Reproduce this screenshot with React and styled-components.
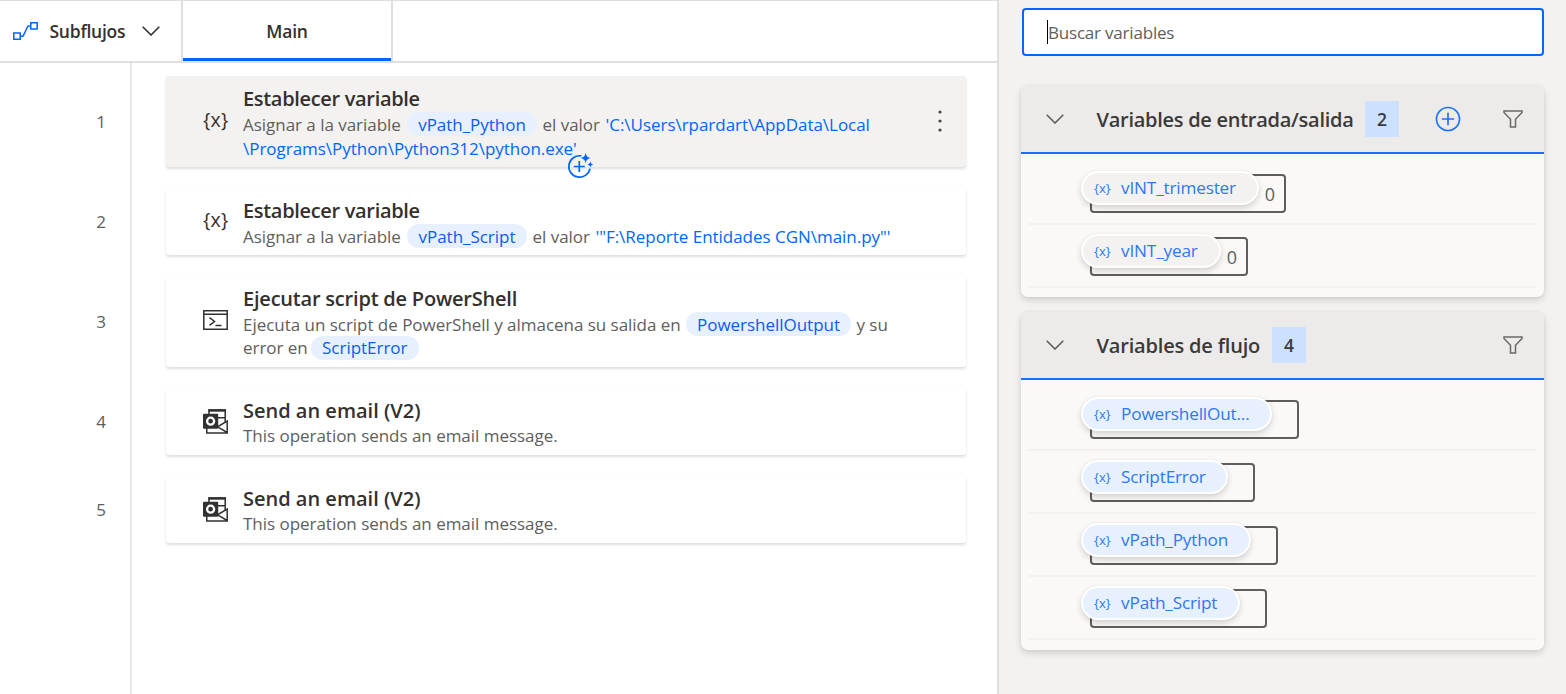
import React from "react";
import styled, { createGlobalStyle } from "styled-components";

const Global = createGlobalStyle`
  *, *::before, *::after { box-sizing: border-box; }
  html, body { margin: 0; padding: 0; background: #fff; overflow: hidden; }
  body { font-family: "Open Sans", "Noto Sans", sans-serif; color: #323130; }
  svg { display: block; flex: none; }
`;

const Page = styled.div`
  display: flex;
  width: 1566px;
  height: 694px;
`;

const Editor = styled.main`
  display: flex;
  flex-direction: column;
  width: 999px;
  border-right: 2px solid #e1dfdd;
`;

const TabBar = styled.header`
  display: flex;
  height: 63px;
  border-top: 1px solid #e1dfdd;
  border-bottom: 2px solid #e1dfdd;
`;

const SubflowButton = styled.div`
  display: flex;
  align-items: center;
  width: 183px;
  padding-left: 13px;
  border-right: 2px solid #e1dfdd;
  font-size: 17.5px;
  font-weight: 600;
`;

const SubflowLabel = styled.span`
  width: 92px;
  margin-left: 11.5px;
  letter-spacing: -0.25px;
`;

const Tab = styled.div`
  display: flex;
  align-items: center;
  justify-content: center;
  width: 210px;
  border-right: 2px solid #e1dfdd;
  box-shadow: inset 0 -3px 0 #0066ff;
  font-size: 17.5px;
  font-weight: 600;
  letter-spacing: -0.2px;
`;

const Steps = styled.div`
  display: flex;
  flex: 1;
`;

const Gutter = styled.div`
  display: flex;
  flex-direction: column;
  gap: 21px;
  width: 132px;
  padding-top: 13px;
  border-right: 2px solid #e8e7e6;
`;

const StepNumber = styled.div`
  display: flex;
  align-items: center;
  justify-content: center;
  height: ${(p) => p.$h}px;
  padding-left: 72px;
  color: #605e5c;
  font-size: 17px;
`;

const Cards = styled.div`
  display: flex;
  flex-direction: column;
  gap: 21px;
  padding: 13px 0 0 34px;
`;

const Card = styled.article`
  position: relative;
  display: flex;
  align-items: center;
  width: 800px;
  height: ${(p) => p.$h}px;
  padding-left: 37px;
  border-radius: 3px;
  background: ${(p) => (p.$active ? "#f3f2f1" : "#fff")};
  box-shadow: 0 2px 3px rgba(0, 0, 0, 0.13), 0 0 1px rgba(0, 0, 0, 0.05);
`;

const CardIcon = styled.div`
  width: 40px;
  padding-bottom: ${(p) => p.$lift || 0}px;
`;

const CardText = styled.div`
  display: flex;
  flex-direction: column;
  align-self: flex-start;
  padding-top: 8px;
`;

const CardTitle = styled.h3`
  margin: 0;
  height: 28px;
  font-size: 20px;
  font-weight: 600;
  line-height: 30px;
  letter-spacing: ${(p) => p.$ls || 0}px;
  white-space: nowrap;
`;

const Line = styled.div`
  display: flex;
  height: 24px;
  color: #605e5c;
  font-size: 17px;
  line-height: ${(p) => (p.$raised ? 24 : 26)}px;
  letter-spacing: -0.03px;
  white-space: pre;
`;

const Text = styled.span`
  width: ${(p) => (p.$w ? p.$w + "px" : "auto")};
  height: 24px;
  color: ${(p) => (p.$value ? "#0066ff" : "inherit")};
`;

const Token = styled.span`
  width: ${(p) => p.$w}px;
  height: 24px;
  border-radius: 12px;
  margin-right: 5.5px;
  background: #e6f0ff;
  color: #0b5cf0;
  text-align: center;
`;

const AddBadge = styled.div`
  position: absolute;
  left: 401px;
  top: 76px;
`;

const MoreButton = styled.div`
  margin-left: auto;
  margin-right: 24.5px;
  padding-bottom: 2px;
`;

const BraceIcon = styled.span`
  display: block;
  color: ${(p) => (p.$small ? "#2f78ee" : "#323130")};
  font-size: ${(p) => (p.$small ? 13 : 19.5)}px;
  font-weight: ${(p) => (p.$small ? 500 : 400)};
  line-height: 24px;
  letter-spacing: ${(p) => (p.$small ? 0 : 0.2)}px;
`;

const Side = styled.aside`
  display: flex;
  flex-direction: column;
  width: 567px;
  padding: 8px 22px 0 22px;
  background: #f3f2f1;
`;

const Search = styled.div`
  display: flex;
  align-items: center;
  width: 522px;
  height: 48px;
  margin-left: 1px;
  padding-left: 23px;
  border: 2px solid #0066ff;
  border-radius: 4px;
  background: #fff;
  color: #605e5c;
  font-size: 17px;
  letter-spacing: -0.2px;
`;

const Caret = styled.i`
  width: 1px;
  height: 24px;
  background: #000;
`;

const Group = styled.section`
  display: flex;
  flex-direction: column;
  width: 523px;
  height: ${(p) => p.$h}px;
  margin-top: ${(p) => p.$mt}px;
  border-radius: 7px;
  background: #faf9f8;
  box-shadow: 0 3px 7px rgba(0, 0, 0, 0.15), 0 0 3px rgba(0, 0, 0, 0.06);
`;

const GroupHead = styled.header`
  display: flex;
  align-items: center;
  height: 67.5px;
  padding: 0 21.5px 0 24.5px;
  border-bottom: 2px solid #1a6fff;
  border-radius: 7px 7px 0 0;
  background: #ecebe9;
  color: #3b3a39;
`;

const GroupTitle = styled.h2`
  margin: 0 0 0 33px;
  padding-top: 2px;
  width: ${(p) => p.$w}px;
  font-size: 20px;
  font-weight: 600;
  white-space: nowrap;
  letter-spacing: ${(p) => p.$ls || 0}px;
`;

const Count = styled.span`
  width: 34px;
  height: 36px;
  background: #cce0ff;
  font-size: 17.5px;
  font-weight: 600;
  line-height: 36px;
  text-align: center;
`;

const HeadActions = styled.div`
  display: flex;
  align-items: center;
  gap: 41.5px;
  margin-left: auto;
`;

const Rows = styled.div`
  display: flex;
  flex-direction: column;
  padding: 8.5px 7px 0;
`;

const VarRow = styled.div`
  display: flex;
  height: 63px;
  padding: 9px 0 0 53px;
  border-bottom: 2px solid #f3f2f1;
`;

const Chip = styled.div`
  display: grid;
  height: 44px;
  width: ${(p) => p.$w + 26.5}px;
`;

const ValueBox = styled.div`
  grid-area: 1 / 1;
  display: flex;
  align-items: center;
  justify-content: flex-end;
  height: 39px;
  margin: 3px 0 0 9px;
  padding: 0 8.5px 0 0;
  border: 2px solid #605e5c;
  border-radius: 4px;
  color: #605e5c;
  font-size: 18px;
`;

const VarPill = styled.div`
  grid-area: 1 / 1;
  z-index: 1;
  display: flex;
  align-items: center;
  width: ${(p) => p.$w}px;
  height: 34px;
  padding-left: 11px;
  border: 2px solid #fff;
  border-radius: 17px;
  background: ${(p) => (p.$neutral ? "#f3f2f1" : "#e6f0ff")};
  box-shadow: 0 3px 6px rgba(0, 0, 0, 0.16), 0 0 2px rgba(0, 0, 0, 0.06);
`;

const VarName = styled.span`
  margin-left: 10.5px;
  padding-bottom: 2px;
  color: #2f78ee;
  font-size: 17.2px;
  font-weight: 450;
  white-space: nowrap;
  letter-spacing: -0.18px;
`;

const Chevron = ({ color = "#323130" }) => (
  <svg width="18" height="10" viewBox="0 0 18 10" fill="none" stroke={color} strokeWidth="1.6">
    <path d="M.7.8 9 9 17.3.8" />
  </svg>
);

const FlowIcon = () => (
  <svg width="25" height="18" viewBox="0 0 25 18" fill="none" stroke="#0066ff" strokeWidth="1.5">
    <path d="M.8 10.9h6.4v6.3H.8zM17.8.8h6.4v6.3h-6.4zM7.2 14.2h2.2c.6 0 .9-.3 1.1-.8l4-8.6c.3-.6.6-.9 1.2-.9h2.1" />
  </svg>
);

const TerminalIcon = () => (
  <svg width="25" height="20" viewBox="0 0 25 20" fill="none" stroke="#323130" strokeWidth="1.5">
    <path d="M.8.8h23.4v18.4H.8zM.8 4.2h23.4M6.5 7.600l5 3.900-5 3.900M12.500 15.500h6" />
  </svg>
);

const OutlookIcon = () => (
  <svg width="25" height="25" viewBox="0 0 25 25">
    <path d="M6 5V1h16.200v12M22.200 8.700H14" fill="none" stroke="#323130" strokeWidth="1.500" />
    <path d="M5.300.3H23v2.400H5.300z" fill="#323130" />
    <path d="M3.800 19v4.900h20.400V12L14.500 17.800l9.700 5.700" fill="none" stroke="#323130" strokeWidth="1.500" />
    <path d="M1 4.700h13.200a1 1 0 0 1 1 1v13a1 1 0 0 1-1 1H1a1 1 0 0 1-1-1v-13a1 1 0 0 1 1-1z" fill="#323130" />
    <circle cx="7.600" cy="12.200" r="3.500" fill="none" stroke="#fff" strokeWidth="2.300" />
  </svg>
);

const AddSparkle = () => (
  <svg width="27" height="27" viewBox="0 0 27 27" fill="none" stroke="#0066ff" strokeWidth="1.700">
    <path d="M14.300 3.900A10.700 10.700 0 1 0 23 16.600M12.300 9v11M6.800 14.500h11" />
    <path d="M18.600 1c.8 3.200 1.700 4.200 5 5.100-3.300.9-4.200 1.900-5 5.100-.8-3.200-1.700-4.200-5-5.100 3.300-.9 4.200-1.900 5-5.100zM23.300 9.500c.5 1.900 1 2.500 3 3-2 .5-2.500 1.100-3 3-.5-1.900-1-2.500-3-3 2-.5 2.500-1.100 3-3z" fill="#0066ff" stroke="none" />
  </svg>
);

const MoreIcon = () => (
  <svg width="4" height="22" viewBox="0 0 4 22" fill="#484644">
    <circle cx="2" cy="2" r="1.600" />
    <circle cx="2" cy="11" r="1.600" />
    <circle cx="2" cy="20" r="1.600" />
  </svg>
);

const PlusCircle = () => (
  <svg width="26" height="26" viewBox="0 0 26 26" fill="none" stroke="#1f74fb" strokeWidth="1.700">
    <circle cx="13" cy="13" r="11.500" />
    <path d="M13 6.800v12.400M6.800 13h12.400" />
  </svg>
);

const FilterIcon = () => (
  <svg width="20" height="18" viewBox="0 0 20 18" fill="none" stroke="#6b6967" strokeWidth="1.500">
    <path d="M1 1h18v1.500l-6.500 6.800v7.700h-5V9.300L1 2.500z" />
  </svg>
);

const VarItem = ({ name, w, value, neutral }) => (
  <VarRow>
    <Chip $w={w}>
      <ValueBox>{value}</ValueBox>
      <VarPill $w={w} $neutral={neutral}>
        <BraceIcon $small>{"{x}"}</BraceIcon>
        <VarName>{name}</VarName>
      </VarPill>
    </Chip>
  </VarRow>
);

const heights = [91, 67, 91, 67, 67];

export default function App() {
  return (
    <Page>
      <Global />
      <Editor>
        <TabBar>
          <SubflowButton>
            <FlowIcon />
            <SubflowLabel>Subflujos</SubflowLabel>
            <Chevron />
          </SubflowButton>
          <Tab>Main</Tab>
        </TabBar>
        <Steps>
          <Gutter>
            {heights.map((h, i) => (
              <StepNumber key={i} $h={h}>{i + 1}</StepNumber>
            ))}
          </Gutter>
          <Cards>
            <Card $h={91} $active>
              <CardIcon $lift={3}><BraceIcon>{"{x}"}</BraceIcon></CardIcon>
              <CardText>
                <CardTitle $ls={-0.32}>Establecer variable</CardTitle>
                <Line>
                  <Text $w={164}>Asignar a la variable</Text>
                  <Token $w={130}>vPath_Python</Token>
                  <Text $w={63}>el valor</Text>
                  <Text $value>{"'C:\\Users\\rpardart\\AppData\\Local"}</Text>
                </Line>
                <Line><Text $value>{"\\Programs\\Python\\Python312\\python.exe'"}</Text></Line>
              </CardText>
              <MoreButton><MoreIcon /></MoreButton>
              <AddBadge><AddSparkle /></AddBadge>
            </Card>
            <Card $h={67}>
              <CardIcon $lift={3}><BraceIcon>{"{x}"}</BraceIcon></CardIcon>
              <CardText>
                <CardTitle $ls={-0.32}>Establecer variable</CardTitle>
                <Line>
                  <Text $w={164}>Asignar a la variable</Text>
                  <Token $w={120}>vPath_Script</Token>
                  <Text $w={63}>el valor</Text>
                  <Text $value>{"'\"F:\\Reporte Entidades CGN\\main.py\"'"}</Text>
                </Line>
              </CardText>
            </Card>
            <Card $h={91}>
              <CardIcon $lift={3}><TerminalIcon /></CardIcon>
              <CardText>
                <CardTitle $ls={-0.21}>Ejecutar script de PowerShell</CardTitle>
                <Line>
                  <Text $w={443}>Ejecuta un script de PowerShell y almacena su salida en</Text>
                  <Token $w={165}>PowershellOutput</Token>
                  <Text>y su</Text>
                </Line>
                <Line $raised>
                  <Text $w={68}>error en</Text>
                  <Token $w={107.5}>ScriptError</Token>
                </Line>
              </CardText>
            </Card>
            {[4, 5].map((n) => (
              <Card $h={67} key={n}>
                <CardIcon $lift={1}><OutlookIcon /></CardIcon>
                <CardText>
                  <CardTitle>Send an email (V2)</CardTitle>
                  <Line $raised><Text>This operation sends an email message.</Text></Line>
                </CardText>
              </Card>
            ))}
          </Cards>
        </Steps>
      </Editor>
      <Side>
        <Search><Caret />Buscar variables</Search>
        <Group $h={211} $mt={30}>
          <GroupHead>
            <Chevron color="#605e5c" />
            <GroupTitle $w={268.4} $ls={-0.27}>Variables de entrada/salida</GroupTitle>
            <Count>2</Count>
            <HeadActions><PlusCircle /><FilterIcon /></HeadActions>
          </GroupHead>
          <Rows>
            <VarItem name="vINT_trimester" w={178} value="0" neutral />
            <VarItem name="vINT_year" w={140} value="0" neutral />
          </Rows>
        </Group>
        <Group $h={338} $mt={15}>
          <GroupHead>
            <Chevron color="#605e5c" />
            <GroupTitle $w={175.500} $ls={-0.18}>Variables de flujo</GroupTitle>
            <Count>4</Count>
            <HeadActions><FilterIcon /></HeadActions>
          </GroupHead>
          <Rows>
            <VarItem name="PowershellOut..." w={191} />
            <VarItem name="ScriptError" w={147} />
            <VarItem name="vPath_Python" w={170} />
            <VarItem name="vPath_Script" w={159} />
          </Rows>
        </Group>
      </Side>
    </Page>
  );
}
